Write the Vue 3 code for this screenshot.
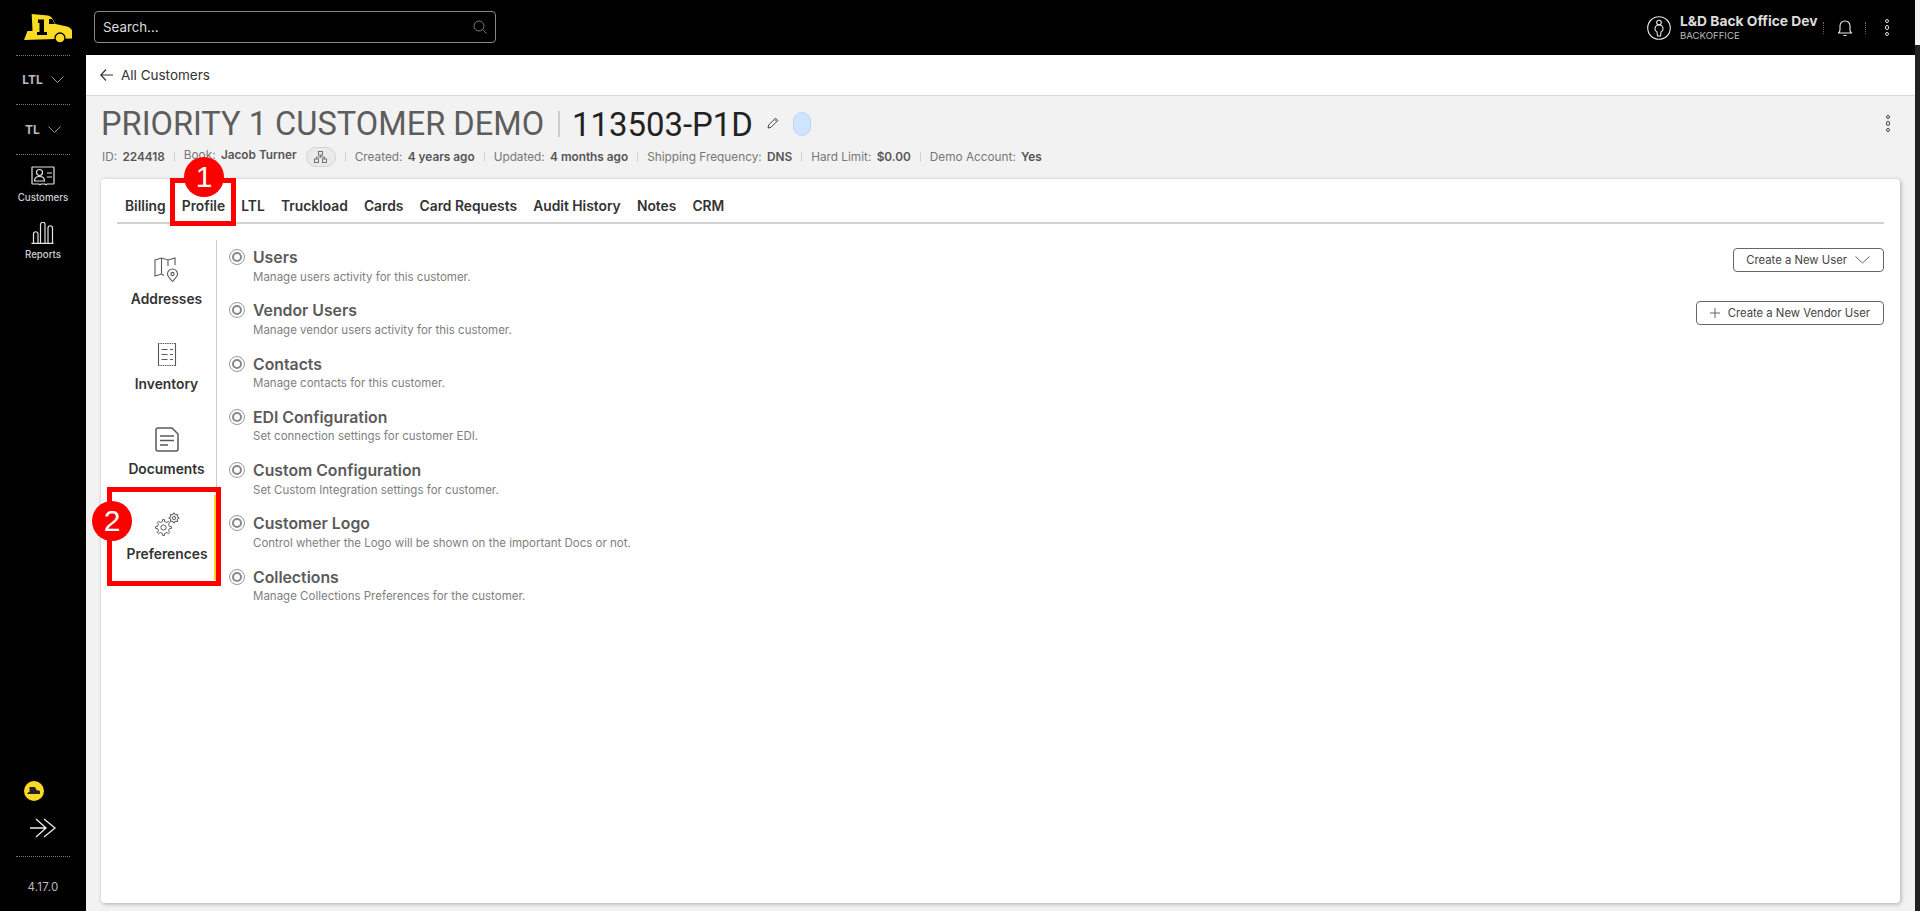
<script setup>
const tabs = ['Billing','Profile','LTL','Truckload','Cards','Card Requests','Audit History','Notes','CRM']
const sections = [
  ['Users','Manage users activity for this customer.'],
  ['Vendor Users','Manage vendor users activity for this customer.'],
  ['Contacts','Manage contacts for this customer.'],
  ['EDI Configuration','Set connection settings for customer EDI.'],
  ['Custom Configuration','Set Custom Integration settings for customer.'],
  ['Customer Logo','Control whether the Logo will be shown on the important Docs or not.'],
  ['Collections','Manage Collections Preferences for the customer.'],
]
function gear(cx, cy, ro, ri, n) {
  const pts = []
  const step = (Math.PI * 2) / n
  for (let k = 0; k < n; k++) {
    const a = k * step
    const w = step * 0.2
    ;[[a - w * 1.3, ri], [a - w * 0.7, ro], [a + w * 0.7, ro], [a + w * 1.3, ri]].forEach(([t, r]) => {
      pts.push((cx + Math.cos(t) * r).toFixed(2) + ' ' + (cy + Math.sin(t) * r).toFixed(2))
    })
  }
  return 'M' + pts.join('L') + 'Z'
}
const bigGear = gear(8.5, 15, 8, 6, 8)
const smallGear = gear(19, 5.5, 5, 3.7, 8)
</script>

<template>
  <div class="page">
    <aside class="side">
      <div class="logo-wrap">
        <svg width="48" height="29" viewBox="0 0 48 29"><path fill="#fada24" d="M7.700 0L24 1.500c2 .5 3 1.500 4 2.500l3.500 6L43 12.500c3 1 5 2.500 5 4.500v7.500L0 26l3.500-9h5z"/><path fill="#000" d="M25 5h3l3 5h-6z"/><path fill="#000" d="M14 5.500h6V18h3v3H13v-3h2.500V9H14z"/><circle cx="36" cy="24" r="5" fill="#fada24" stroke="#000" stroke-width="1.300"/></svg>
      </div>
      <div class="drop drop-ltl"><b>LTL</b><svg width="13" height="7" viewBox="0 0 13 7"><path d="M.5.500l6 6 6-6" fill="none" stroke="#999"/></svg></div>
      <div class="drop drop-tl"><b>TL</b><svg width="13" height="7" viewBox="0 0 13 7"><path d="M.5.500l6 6 6-6" fill="none" stroke="#999"/></svg></div>
      <div class="nav-link">
        <svg width="24" height="20" viewBox="0 0 24 20" fill="none" stroke="#e4e4e4" stroke-width="1.200"><path d="M1.500 1h21a.5.5 0 0 1 .5.5v16a.5.5 0 0 1-.5.5H16c-.500 1-1.500 1-2 0h-4c-.500 1-1.500 1-2 0H1.500a.5.5 0 0 1-.5-.5v-16a.5.5 0 0 1 .5-.5z"/><circle cx="8.500" cy="6.500" r="3"/><path d="M3.500 15c0-3 2-4.500 5-4.500s5 1.500 5 4.500zM16 7h5M16 11h5"/></svg>
        <span>Customers</span>
      </div>
      <div class="nav-link reports">
        <svg width="24" height="22" viewBox="0 0 24 22" fill="none" stroke="#e4e4e4" stroke-width="1.200"><path d="M.5 21.300h22M2.500 21v-9a2 2 0 0 1 4.500 0v9M9.500 21V2.500a2.200 2.200 0 0 1 4.500 0V21M17 21V6a2.200 2.200 0 0 1 4.500 0v15"/></svg>
        <span>Reports</span>
      </div>
      <div class="side-bottom">
        <div class="coin"><svg width="14" height="8" viewBox="0 0 14 8"><path d="M2.500 0H8l1.500 3L13 4v3H0l1.500-2h1z" fill="#222"/></svg></div>
        <svg class="expand" width="26" height="20" viewBox="0 0 26 20" fill="none" stroke="#eee" stroke-width="1.300"><path d="M0 10h16M6 1l10 9-10 9M14 1l11 9-11 9"/></svg>
        <div class="version">4.17.0</div>
      </div>
    </aside>

    <div class="main">
      <header class="top">
        <div class="search">
          <span>Search...</span>
          <svg width="14" height="14" viewBox="0 0 14 14" fill="none" stroke="#777"><circle cx="6" cy="6" r="5"/><path d="M9.500 9.500l4 4"/></svg>
        </div>
        <div class="top-right">
          <svg width="24" height="24" viewBox="0 0 24 24" fill="none" stroke="#e6e6e6" stroke-width="1.100"><circle cx="12" cy="12" r="11.300"/><circle cx="12" cy="6.500" r="2.300"/><path d="M12 9c-3 0-4 2-4 4 0 2 1.500 2.500 2 3l.5 4h3l.5-4c.5-.5 2-1 2-3 0-2-1-4-4-4z"/></svg>
          <div class="who"><b>L&amp;D Back Office Dev</b><small>BACKOFFICE</small></div>
          <i class="vdot first"></i>
          <svg class="bell" width="14" height="16" viewBox="0 0 14 16" fill="none" stroke="#eee" stroke-width="1.100"><path d="M.5 13h13c-1-1-1.500-2-1.500-3V6c0-3-2-5-5-5S2 3 2 6v4c0 1-.5 2-1.500 3z"/><path d="M5.500 15.500h3" /></svg>
          <i class="vdot last"></i>
          <div class="dots light"><i></i><i></i><i></i></div>
        </div>
      </header>

      <div class="back">
        <svg width="13" height="12" viewBox="0 0 13 12" fill="none" stroke="#333" stroke-width="1.200"><path d="M13 6H1M6 .5L.8 6 6 11.500"/></svg>
        <span>All Customers</span>
      </div>

      <section class="content">
        <div class="head">
          <h1>PRIORITY 1 CUSTOMER DEMO</h1>
          <i class="bar"></i>
          <h2>113503-P1D</h2>
          <svg class="pencil" width="12" height="12" viewBox="0 0 12 12" fill="none" stroke="#444"><path d="M1 11l.7-3L8.500 1.200l2.300 2.300L4 10.300zM7.500 2.200l2.300 2.300"/></svg>
          <span class="pill"></span>
          <div class="dots dark"><i></i><i></i><i></i></div>
        </div>
        <div class="meta">
          <span>ID: <b>224418</b></span><i></i>
          <span class="book">Book: <b>Jacob Turner</b></span>
          <span class="org"><svg width="13" height="12" viewBox="0 0 13 12" fill="none" stroke="#666" stroke-width=".9"><rect x="4.500" y=".5" width="4" height="3.500"/><rect x=".5" y="8" width="4" height="3.500"/><rect x="8.500" y="8" width="4" height="3.500"/><path d="M6.500 4v2M2.500 8V6h8v2"/></svg></span><i></i>
          <span>Created: <b>4 years ago</b></span><i></i>
          <span>Updated: <b>4 months ago</b></span><i></i>
          <span>Shipping Frequency: <b>DNS</b></span><i></i>
          <span>Hard Limit: <b>$0.00</b></span><i></i>
          <span>Demo Account: <b>Yes</b></span>
        </div>

        <div class="card">
          <nav class="tabs">
            <a v-for="t in tabs" :key="t" :class="{ active: t === 'Profile' }">{{ t }}</a>
          </nav>
          <div class="body">
            <div class="subnav">
              <div class="sub">
                <svg width="25" height="25" viewBox="0 0 25 25" fill="none" stroke="#5a5a5a" stroke-width="1.100"><path d="M10 18.500l-2.500-1.500L1 19V3l6.500-2L14 3l7-2v7M7.500 1v16M14 3v6"/><path d="M18.500 24.500c-2.500-3-5-5-5-7.500a5 5 0 0 1 10 0c0 2.500-2.500 4.500-5 7.500z"/><circle cx="18.500" cy="17" r="1.600"/></svg>
                <span>Addresses</span>
              </div>
              <div class="sub">
                <svg width="20" height="25" viewBox="0 0 20 25" fill="none" stroke="#5a5a5a" stroke-width="1.100"><path d="M1 1.500h18M1 23.500h18" stroke-dasharray="1.500 .8" /><path d="M1.500 1v23M18.500 1v23M4.500 7.500h6M13 7.500h3M4.500 12.500h6M13 12.500h3M4.500 17.500h6M13 17.500h3"/></svg>
                <span>Inventory</span>
              </div>
              <div class="sub">
                <svg width="24" height="25" viewBox="0 0 24 25" fill="none" stroke="#5a5a5a" stroke-width="1.500"><path d="M1 3a2 2 0 0 1 2-2h14l6 6v15a2 2 0 0 1-2 2H3a2 2 0 0 1-2-2z"/><path d="M5 9h14M5 13.500h14M5 18h8" stroke-width="1.600"/></svg>
                <span>Documents</span>
              </div>
              <div class="sub active">
                <svg width="25" height="25" viewBox="0 0 25 24" fill="none" stroke="#5a5a5a" stroke-width="1"><path :d="bigGear"/><circle cx="8.500" cy="15" r="2.600"/><path :d="smallGear"/><circle cx="19" cy="5.500" r="1.600"/></svg>
                <span>Preferences</span>
              </div>
            </div>
            <div class="list">
              <div v-for="(s, i) in sections" :key="s[0]" class="item">
                <span class="radio"><i></i></span>
                <div class="txt">
                  <h3>{{ s[0] }}</h3>
                  <p>{{ s[1] }}</p>
                </div>
                <button v-if="i === 0" class="btn">Create a New User
                  <svg width="15" height="8" viewBox="0 0 15 8"><path d="M.5.500l7 6.500 7-6.500" fill="none" stroke="#666"/></svg>
                </button>
                <button v-if="i === 1" class="btn">
                  <svg width="10" height="10" viewBox="0 0 10 10"><path d="M5 0v10M0 5h10" stroke="#666" fill="none"/></svg>
                  Create a New Vendor User
                </button>
              </div>
            </div>
          </div>
          <div class="mark box1"></div>
          <div class="badge b1">1</div>
          <div class="mark box2"></div>
          <div class="badge b2">2</div>
        </div>
      </section>
    </div>
    <div class="scroll"></div>
  </div>
</template>

<style>
html, body { margin: 0; padding: 0; overflow: hidden; }
</style>

<style scoped>
.page { display: flex; width: 1920px; height: 911px; font-family: Inter, "Noto Sans", sans-serif; background: #f2f2f2; overflow: hidden; }
.side { width: 86px; flex: none; background: #000; color: #ddd; display: flex; flex-direction: column; align-items: center; }
.logo-wrap { height: 56px; width: 54px; border-bottom: 1px dotted #777; display: flex; align-items: center; justify-content: center; box-sizing: border-box; padding-left: 9px; padding-top: 2px; overflow: visible; }
.logo-wrap svg { flex: none; }
.drop { width: 54px; display: flex; align-items: center; justify-content: center; gap: 8px; border-bottom: 1px dotted #777; box-sizing: border-box; font-size: 12px; color: #bbb; padding-bottom: 1px; }
.drop b { font-weight: 700; }
.drop-ltl { height: 49px; }
.drop-tl { height: 50px; }
.nav-link { display: flex; flex-direction: column; align-items: center; gap: 6px; font-size: 9.700px; font-weight: 500; margin-top: 11px; color: #d0d0d0; }
.reports { margin-top: 19px; gap: 5px; }
.side-bottom { margin-top: auto; display: flex; flex-direction: column; align-items: center; width: 54px; }
.coin { width: 20px; height: 20px; border-radius: 50%; background: #fada24; display: flex; align-items: center; justify-content: center; margin-right: 18px; }
.expand { margin-top: 17px; margin-bottom: 18px; }
.version { width: 100%; border-top: 1px dotted #777; text-align: center; font-size: 11.500px; letter-spacing: .3px; color: #bbb; padding: 23px 0 17px; }

.main { flex: 1; min-width: 0; display: flex; flex-direction: column; }
.top { height: 55px; flex: none; background: #000; display: flex; align-items: center; justify-content: space-between; padding: 0 26px 0 8px; }
.search { width: 402px; height: 32px; box-sizing: border-box; border: 1px solid #888; border-radius: 4px; display: flex; align-items: center; justify-content: space-between; padding: 0 8px; color: #ddd; font-size: 13.300px; margin-bottom: 1px; }
.top-right { display: flex; align-items: center; gap: 9px; }
.who { display: flex; flex-direction: column; color: #ddd; }
.who b { font-size: 13.800px; font-weight: 700; line-height: 16px; }
.who small { font-size: 9.600px; line-height: 14px; color: #bbb; }
.vdot { display: block; width: 0; height: 12px; border-left: 1px dotted #666; margin: 0 5px 0 0; }
.vdot.first { margin-left: -4px; }
.vdot.last { margin-right: 10px; }
.bell { margin-right: 4px; }
.dots { display: flex; flex-direction: column; gap: 2px; }
.dots i { display: block; border-radius: 50%; border: 1px solid currentColor; box-sizing: content-box; width: 2.500px; height: 2.500px; }
.dots.light { color: #ddd; }
.dots.dark { color: #444; margin-left: auto; margin-right: 10px; margin-top: -1px; }

.back { height: 41px; flex: none; box-sizing: border-box; background: #fff; border-bottom: 1.500px solid #d8d8d8; display: flex; align-items: center; gap: 8px; padding-left: 14px; font-size: 13.500px; color: #333; }
.content { flex: 1; min-height: 0; padding: 0 15px 8px 15px; display: flex; flex-direction: column; }
.head { display: flex; align-items: center; height: 50px; padding-top: 6px; box-sizing: border-box; }
h1 { margin: 0; font-family: Roboto, sans-serif; font-size: 32.600px; font-weight: 400; color: #5d5d5d; white-space: nowrap; }
.bar { width: 2px; height: 26px; background: #ccc; margin: 0 12px 0 14px; }
h2 { margin: 0; font-family: Roboto, sans-serif; font-size: 32.900px; font-weight: 400; color: #222; white-space: nowrap; }
.pencil { margin-left: 14px; margin-top: -3px; }
.pill { width: 18px; height: 24px; border-radius: 9px; background: #cfe4fd; border: 1px solid #b8d8fb; box-sizing: border-box; margin-left: 14px; margin-top: -1px; }
.meta { display: flex; align-items: center; font-size: 11.800px; color: #777; height: 21px; gap: 9px; padding-left: 1px; margin-bottom: 12px; white-space: nowrap; }
.meta b { color: #555; font-weight: 600; margin-left: 2px; }
.meta > i { width: 1px; height: 10px; background: #d4d4d4; }
.book { position: relative; top: -2px; }
.org { width: 30px; height: 20px; border-radius: 10px; background: #eaeaea; border: 1px solid #d4d4d4; box-sizing: border-box; display: flex; align-items: center; justify-content: center; }

.card { position: relative; flex: 1; background: #fff; border-radius: 4px; box-shadow: 1px 1px 4px rgba(0,0,0,.3); padding: 0 16px; display: flex; flex-direction: column; min-height: 0; }
.tabs { height: 45px; flex: none; box-sizing: border-box; border-bottom: 2px solid #d2d2d2; display: flex; align-items: flex-end; gap: 16.200px; padding-left: 8px; }
.tabs a { font-size: 13.800px; font-weight: 600; color: #333; line-height: 17px; padding-bottom: 7px; }
.tabs a.active { position: relative; }
.body { display: flex; padding-top: 16px; }
.subnav { width: 100px; flex: none; box-sizing: border-box; border-right: 1px solid #ccc; display: flex; flex-direction: column; height: 340px; }
.sub { height: 85px; flex: none; box-sizing: border-box; display: flex; flex-direction: column; align-items: center; justify-content: flex-start; padding-top: 16.500px; gap: 9.500px; font-size: 13.800px; font-weight: 600; color: #333; }
.sub svg { height: 25px; }
.sub.active { border-right: 3px solid #f9d71c; margin-right: -1px; padding-left: 3px; }
.list { flex: 1; padding-left: 12px; }
.item { position: relative; display: flex; height: 53.300px; box-sizing: border-box; padding-top: 8px; }
.radio { width: 16px; height: 16px; flex: none; box-sizing: border-box; border: 1.500px solid #999; border-radius: 50%; display: flex; align-items: center; justify-content: center; margin-top: 1px; }
.radio i { width: 10px; height: 10px; box-sizing: border-box; border: 2px solid #888; border-radius: 50%; }
.txt { margin-left: 8px; padding-top: 1px; }
h3 { margin: 0; font-size: 15.800px; line-height: 18px; font-weight: 600; color: #5a5a5a; }
p { margin: 2.500px 0 0; font-size: 11.500px; line-height: 15px; color: #808080; }
.btn { position: absolute; right: 0; top: 8px; height: 24px; box-sizing: border-box; background: #fff; border: 1px solid #666; border-radius: 4px; font: inherit; font-size: 11.300px; color: #444; display: flex; align-items: center; gap: 8px; padding: 0 13px 0 12.500px; white-space: nowrap; }

.mark { position: absolute; border: 5px solid #f00; box-sizing: border-box; pointer-events: none; }
.box1 { left: 69px; top: -1px; width: 66px; height: 48px; }
.box2 { left: 6px; top: 308px; width: 114px; height: 99px; }
.badge { position: absolute; width: 40px; height: 40px; border-radius: 50%; background: #f00; color: #fff; font-family: "Liberation Sans", sans-serif; font-size: 30px; display: flex; align-items: center; justify-content: center; }
.b1 { left: 83px; top: -22px; }
.b2 { left: -9px; top: 322px; }

.scroll { width: 5px; flex: none; background: linear-gradient(#f1f1f1 45px, #222 45px); }
</style>
